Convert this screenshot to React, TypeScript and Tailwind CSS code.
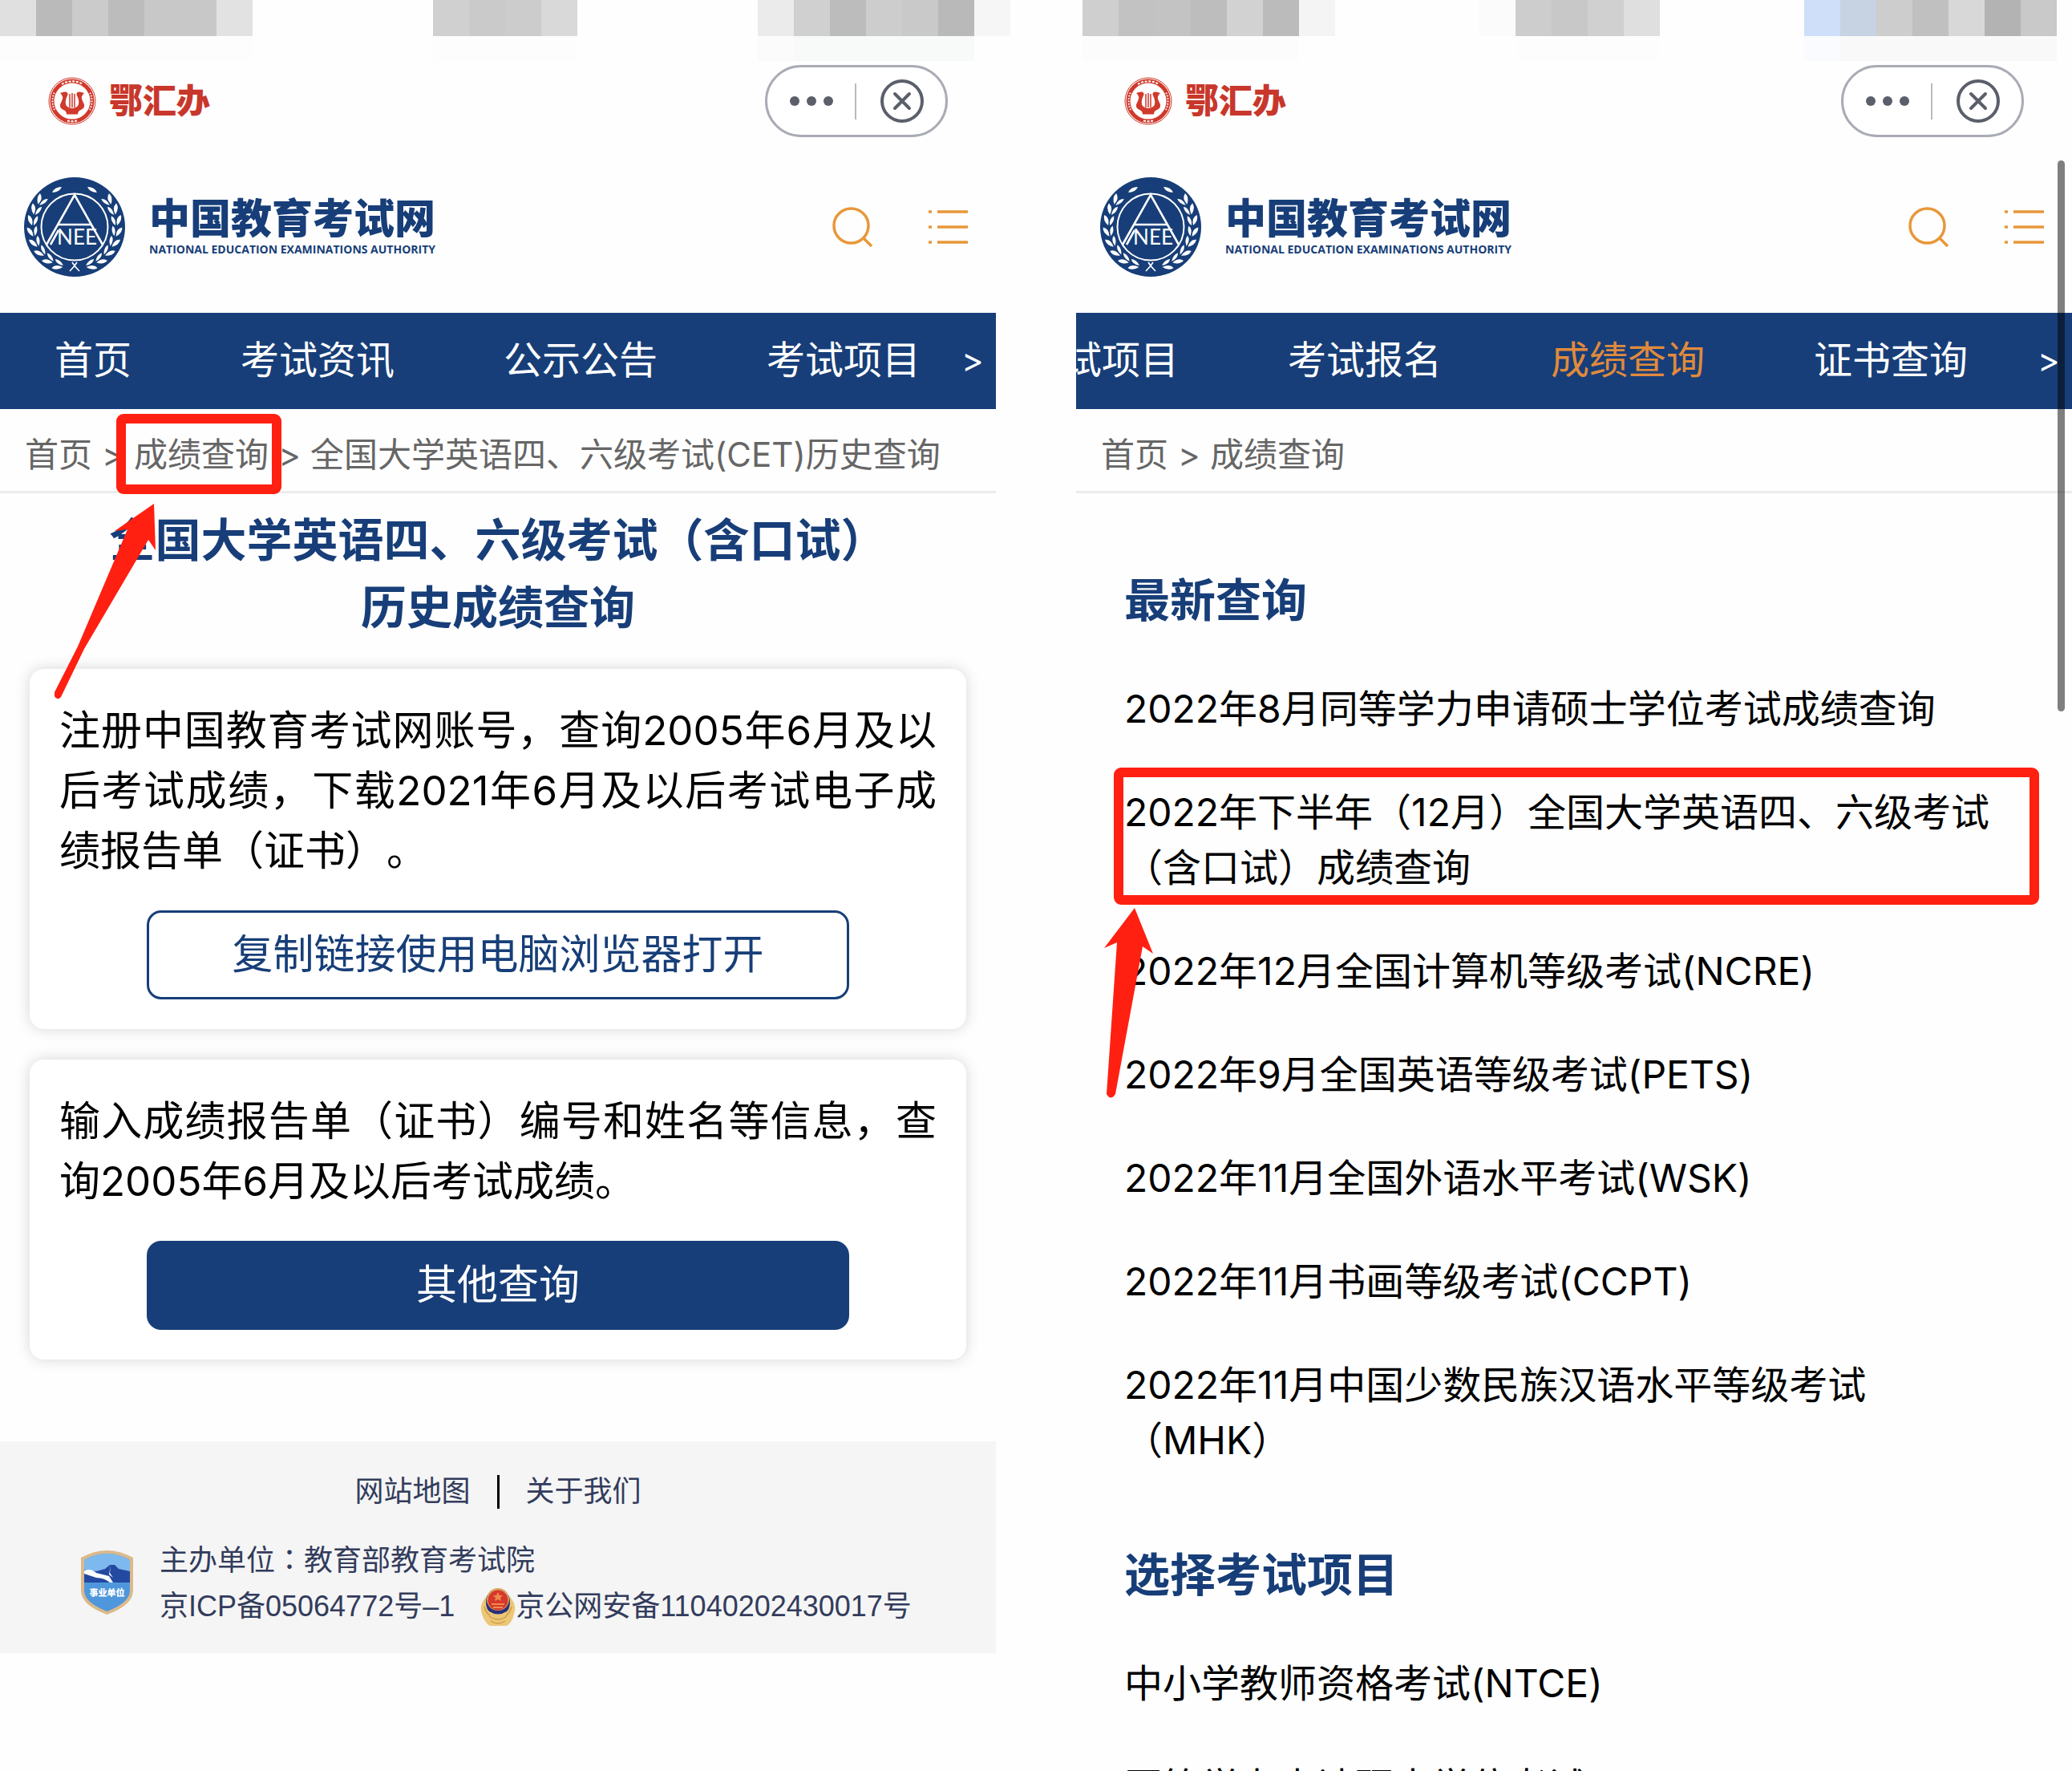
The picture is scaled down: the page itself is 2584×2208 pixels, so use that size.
import React from "react";

const STRIP: [number, string][] = [
  [1, "bg-[#e0e0e0]"], [1, "bg-[#bababa]"], [1, "bg-[#cbcbcb]"], [1, "bg-[#bcbcbc]"], [2, "bg-[#c8c8c8]"], [1, "bg-[#e2e2e2]"],
  [5, ""], [1, "bg-[#d0d0d0]"], [1, "bg-[#cacaca]"], [1, "bg-[#cccccc]"], [1, "bg-[#d9d9d9]"],
  [5, ""], [1, "bg-[#ebebeb]"], [1, "bg-[#d0d0d0]"], [1, "bg-[#bcbcbc]"], [1, "bg-[#cdcdcd]"], [1, "bg-[#c9c9c9]"], [1, "bg-[#b9b9b9]"], [1, "bg-[#f6f6f6]"],
  [2, ""], [1, "bg-[#cfcfcf]"], [1, "bg-[#c2c2c2]"], [1, "bg-[#c3c3c3]"], [1, "bg-[#bdbdbd]"], [1, "bg-[#d2d2d2]"], [1, "bg-[#bbbbbb]"], [1, "bg-[#f4f4f4]"],
  [4, ""], [1, "bg-[#fbfbfb]"], [1, "bg-[#cdcdcd]"], [1, "bg-[#c8c8c8]"], [1, "bg-[#d0d0d0]"], [1, "bg-[#dfdfdf]"],
  [4, ""], [1, "bg-[#cfdffa]"], [1, "bg-[#c7d2e2]"], [1, "bg-[#cdcdcd]"], [1, "bg-[#c0c0c0]"], [1, "bg-[#d8d8d8]"], [1, "bg-[#b3b3b3]"], [1, "bg-[#c9c9c9]"],
];

const STRIP_FADE: [number, string][] = [
  [7, "bg-[#fdfdfd]"], [5, ""], [4, "bg-[#fdfdfd]"], [5, ""], [1, "bg-[#fbfbfb]"], [5, "bg-[#f8f9f9]"],
  [3, ""], [6, "bg-[#fcfcfc]"], [6, ""], [4, "bg-[#fdfdfd]"], [4, ""], [1, "bg-[#f9fbff]"], [6, "bg-[#f9f9f9]"],
];

function Mosaic() {
  return (
    <div aria-hidden="true" className="w-full overflow-hidden">
      <div className="flex h-[45px]">
        {STRIP.map(([n, c], i) => (
          <div key={i} className={"shrink-0 " + c} style={{ width: n * 45 }} />
        ))}
      </div>
      <div className="flex h-[31px]">
        {STRIP_FADE.map(([n, c], i) => (
          <div key={i} className={"shrink-0 " + c} style={{ width: n * 45 }} />
        ))}
      </div>
    </div>
  );
}

function LyreLogo() {
  return (
    <svg viewBox="0 0 60 60" className="size-[60px]" aria-hidden="true">
      <g fill="none" stroke="#d0392b">
        <circle cx="30" cy="30" r="29" strokeWidth="1" />
        <circle cx="30" cy="30" r="25" strokeWidth="5" />
      </g>
      <g fill="none" stroke="#fff" strokeWidth="2">
        <path d="M8 41A25 25 0 0 1 8 19M52 41A25 25 0 0 0 52 19" strokeDasharray="1.6 1.8" />
        <path d="M17 9A25 25 0 0 1 43 9" strokeDasharray="3 1.6" />
        <path d="M24 54.5A25 25 0 0 0 36 54.5" strokeDasharray="3 1.6" />
      </g>
      <path
        d="M15 20Q25 16 24.500 22Q19 33 24 37Q30 41 36 37Q41 33 35.500 22Q35 16 45 20Q40 24 43 30Q48 38 41 41Q37 42 37 46.500H23Q23 42 19 41Q12 38 17 30Q20 24 15 20Z"
        fill="#d0392b"
      />
      <path d="M27 21V38M30 20V38M33 21V38" stroke="#d0392b" strokeWidth="1.500" />
    </svg>
  );
}

const LEAVES = [16, 31, 46, 61, 76, 91, 106, 121];

function Laurel() {
  return (
    <g fill="#fff">
      {LEAVES.map((deg) => {
        const t = (deg * Math.PI) / 180;
        const x = -52 * Math.sin(t);
        const y = 52 * Math.cos(t);
        const dir = 180 + deg;
        return (
          <g key={deg} transform={`translate(${x} ${y}) rotate(${dir})`}>
            <path d="M0 -1Q6 -8 13 -6Q10 1 0 -1Z" />
            <path d="M0 1Q5 7 12 6Q9 0 0 1Z" />
          </g>
        );
      })}
      <path d="M-28 -42Q-25 -49 -16 -49Q-19 -42 -28 -42Z" />
    </g>
  );
}

function NeeaLogo() {
  return (
    <svg viewBox="0 0 126 124" className="h-[124px] w-[126px]" aria-hidden="true">
      <ellipse cx="63" cy="62" rx="63" ry="62" fill="#173e78" />
      <g transform="translate(63 61)">
        <Laurel />
        <g transform="scale(-1 1)">
          <Laurel />
        </g>
        <path d="M-6 56Q0 50 3 45M6 56Q0 50 -3 45" fill="none" stroke="#fff" strokeWidth="1.600" />
      </g>
      <circle cx="63" cy="62" r="41.500" fill="#173e78" stroke="#fff" strokeWidth="2" />
      <path d="M28 84L63 22L98 84M43 59H83M33 84L43 66" fill="none" stroke="#fff" strokeWidth="2.600" />
      <text x="66" y="84" textAnchor="middle" fontSize="26" fill="#fff" fontFamily="Lato, sans-serif">
        NEE
      </text>
    </svg>
  );
}

function SearchIcon() {
  return (
    <svg viewBox="0 0 50 50" className="size-[50px]" fill="none" stroke="#e8973a" strokeWidth="3.500" aria-hidden="true">
      <circle cx="23.500" cy="23.500" r="21.500" />
      <path d="M38 38L49 49" />
    </svg>
  );
}

function ListIcon() {
  return (
    <svg viewBox="0 0 50 50" className="size-[50px]" stroke="#e8973a" strokeWidth="3.500" aria-hidden="true">
      <path d="M0 6H4M11 6H49M0 25H4M11 25H49M0 44H4M11 44H49" />
    </svg>
  );
}

function CloseIcon() {
  return (
    <svg viewBox="0 0 56 56" className="size-[56px]" fill="none" stroke="#5b5f6b" strokeWidth="4" strokeLinecap="round" aria-hidden="true">
      <circle cx="28" cy="28" r="25" />
      <path d="M19 19L37 37M37 19L19 37" />
    </svg>
  );
}

function Header() {
  return (
    <header>
      <div className="flex items-center justify-between pt-[5px] pr-[60px] pl-[60px]">
        <div className="flex items-center gap-4">
          <LyreLogo />
          <span className="text-[42px] leading-[48px] font-black text-[#c8372b]">鄂汇办</span>
        </div>
        <div className="flex h-[90px] w-[228px] items-center rounded-full border-[3px] border-[#a9acb4] bg-white">
          <button aria-label="更多" className="flex flex-1 items-center justify-center gap-[9px]">
            <span className="size-3 rounded-full bg-[#5b5f6b]" />
            <span className="size-3 rounded-full bg-[#5b5f6b]" />
            <span className="size-3 rounded-full bg-[#5b5f6b]" />
          </button>
          <span className="h-[45px] w-[2px] bg-[#b9bbc1]" />
          <button aria-label="关闭" className="flex flex-1 items-center justify-center pl-[2px]">
            <CloseIcon />
          </button>
        </div>
      </div>
      <div className="flex h-[219px] items-center justify-between pt-[4px] pr-[34px] pl-[30px]">
        <a href="#home" className="flex items-center gap-[30px] text-[#173e78]">
          <NeeaLogo />
          <span className="flex flex-col">
            <span className="text-[51px] leading-[56px] font-black">中国教育考试网</span>
            <span className="font-['Open_Sans',sans-serif] text-[14px] leading-[20px] font-bold whitespace-nowrap">
              NATIONAL EDUCATION EXAMINATIONS AUTHORITY
            </span>
          </span>
        </a>
        <div className="flex items-center gap-[70px]">
          <button aria-label="搜索">
            <SearchIcon />
          </button>
          <button aria-label="菜单">
            <ListIcon />
          </button>
        </div>
      </div>
    </header>
  );
}

function Nav({ items, active, scrolled }: { items: string[]; active?: string; scrolled?: boolean }) {
  return (
    <nav className="flex h-[120px] items-center bg-[#173e78] pb-[2px] text-[48px] leading-[72px] text-white">
      <div className="min-w-0 flex-1 overflow-hidden">
        <ul className={scrolled ? "-ml-[132px] flex" : "flex"}>
          {items.map((t) => (
            <li key={t} className="shrink-0 px-[68px]">
              <a href="#nav" className={t === active ? "text-[#e08a3c]" : ""}>{t}</a>
            </li>
          ))}
        </ul>
      </div>
      <button aria-label="更多栏目" className="w-[58px] shrink-0 text-center text-[42px]">&gt;</button>
    </nav>
  );
}

function Sep() {
  return <span className="w-[52px] text-center">&gt;</span>;
}

const CRUMBS = "flex h-[105px] items-center border-b-[3px] border-[#ececec] px-[31px] pt-[12px] text-[42px] leading-[60px] text-[#666] whitespace-nowrap";
const BODY_TEXT = "text-justify text-[51px] leading-[75px] text-black";
const CARD = "rounded-[18px] bg-white px-[37px] pt-[39px] pb-[37px] shadow-[0_0_18px_rgba(0,0,0,0.16)]";

function LeftPage() {
  return (
    <section className="min-w-0">
      <Header />
      <Nav items={["首页", "考试资讯", "公示公告", "考试项目"]} />
      <div className={CRUMBS}>
        <a href="#home">首页</a>
        <Sep />
        <a href="#score" className="relative">
          成绩查询
          <span className="absolute -top-[21px] -right-[16px] -left-[22px] h-[100px] rounded-[9px] border-[12px] border-[#ff2012]" />
          <svg viewBox="0 0 130 250" className="absolute top-[90px] -left-[99px] h-[250px] w-[130px]" aria-hidden="true">
            <path d="M124 1L126 59L117 46L37 182L8 242Q3 247 0 241Q-1 238 0 236L29 179L91 33L75 35Z" fill="#ff2012" />
          </svg>
        </a>
        <Sep />
        <span>全国大学英语四、六级考试(CET)历史查询</span>
      </div>
      <h1 className="pt-[17px] text-center text-[57px] leading-[84px] font-bold text-[#173e78]">
        全国大学英语四、六级考试（含口试）
        <br />
        历史成绩查询
      </h1>
      <div className="flex flex-col gap-[38px] px-[37px] pt-[34px]">
        <div className={CARD}>
          <p className={BODY_TEXT}>
            注册中国教育考试网账号，查询2005年6月及以后考试成绩，下载2021年6月及以后考试电子成绩报告单（证书）。
          </p>
          <button className="mx-auto mt-[37px] block h-[111px] w-4/5 rounded-[18px] border-[3px] border-[#173e78] bg-white text-[51px] text-[#173e78]">
            复制链接使用电脑浏览器打开
          </button>
        </div>
        <div className={CARD}>
          <p className={BODY_TEXT}>输入成绩报告单（证书）编号和姓名等信息，查询2005年6月及以后考试成绩。</p>
          <button className="mx-auto mt-[37px] block h-[111px] w-4/5 rounded-[18px] bg-[#173e78] text-[51px] text-white">
            其他查询
          </button>
        </div>
      </div>
      <footer className="mt-[102px] h-[264px] bg-[#f5f5f5] pt-[34px] font-['Liberation_Sans','Noto_Sans_CJK_SC',sans-serif] text-[36px] leading-[57px] text-[#333c5c]">
        <div className="flex items-center justify-center gap-[33px]">
          <a href="#map">网站地图</a>
          <span className="h-[42px] w-[3px] bg-black" />
          <a href="#about">关于我们</a>
        </div>
        <div className="mt-[26px] flex items-center gap-[32px] pl-[100px] whitespace-nowrap">
          <Shield />
          <div>
            <p>主办单位<span className="font-['Noto_Sans_CJK_TC']">：</span>教育部教育考试院</p>
            <p className="flex items-center">
              <a href="#icp">京ICP备05064772号–1</a>
              <span className="ml-[32px]"><PoliceBadge /></span>
              <a href="#police">京公网安备11040202430017号</a>
            </p>
          </div>
        </div>
      </footer>
    </section>
  );
}

function Shield() {
  return (
    <svg viewBox="0 0 67 80" className="h-[80px] w-[67px] shrink-0" aria-hidden="true">
      <path d="M1 9Q18 0 33.500 0Q49 0 66 9V50Q66 68 33.500 80Q1 68 1 50Z" fill="#dcb98a" />
      <path d="M5 12Q19 4 33.500 4Q48 4 62 12V50Q62 65 33.500 76Q5 65 5 50Z" fill="#4f97dc" />
      <path d="M5 12Q19 4 33.500 4Q48 4 62 12V39H5Z" fill="#7db9ee" />
      <path d="M5 24L20 26L31 23L37 18H43L48 23L62 26V40H5Z" fill="#2349a0" />
      <path d="M5 25Q14 22 20 28L36 32L41 40H37Q30 34 20 34L5 29ZM38 18L37 28L41 34L36 30Z" fill="#fff" />
      <text x="33.500" y="57" textAnchor="middle" fontSize="11" fontWeight="900" fill="#fff">事业单位</text>
    </svg>
  );
}

function PoliceBadge() {
  return (
    <svg viewBox="0 0 44 48" className="h-[48px] w-[44px]" aria-hidden="true">
      <path d="M7 12Q-2 22 2 33Q5 44 12 48H33Q40 44 42 33Q46 22 37 12Z" fill="#ecc777" />
      <path d="M8 11Q5 24 11 30Q22 37 33 30Q39 24 36 11L30 4H14Z" fill="#28307c" />
      <circle cx="22" cy="15" r="14" fill="#d8a560" />
      <circle cx="22" cy="16" r="12.500" fill="#d6382c" />
      <path d="M22 6L24 10H28L25 13L26 17L22 15L18 17L19 13L16 10H20ZM14 20H30V22H14ZM16 24H28V26H16Z" fill="#ef8a4d" />
      <path d="M11 36Q22 44 33 36M13 42Q22 48 31 42M5 24Q7 32 12 35M39 24Q37 32 32 35" stroke="#cf9c45" strokeWidth="1.500" fill="none" />
    </svg>
  );
}

const LATEST = [
  "2022年8月同等学力申请硕士学位考试成绩查询",
  "2022年下半年（12月）全国大学英语四、六级考试（含口试）成绩查询",
  "2022年12月全国计算机等级考试(NCRE)",
  "2022年9月全国英语等级考试(PETS)",
  "2022年11月全国外语水平考试(WSK)",
  "2022年11月书画等级考试(CCPT)",
  "2022年11月中国少数民族汉语水平等级考试（MHK）",
];

const PROJECTS = ["中小学教师资格考试(NTCE)", "同等学力申请硕士学位考试"];

const H2 = "text-[57px] leading-[84px] font-bold text-[#173e78]";
const LIST = "mt-[58px] flex flex-col gap-[60px] text-[48px] leading-[69px] text-black";

function RightPage() {
  return (
    <section className="relative min-w-0">
      <Header />
      <Nav items={["考试项目", "考试报名", "成绩查询", "证书查询"]} active="成绩查询" scrolled />
      <div className={CRUMBS}>
        <a href="#home">首页</a>
        <Sep />
        <a href="#score">成绩查询</a>
      </div>
      <div className="flex flex-col gap-[92px] pt-[92px] pr-[90px] pl-[60px]">
        <div>
          <h2 className={H2}>最新查询</h2>
          <ul className={LIST}>
            {LATEST.map((t, i) => (
              <li key={t} className="relative">
                <a href="#item">{t}</a>
                {i === 1 && (
                  <>
                    <span className="absolute -top-[21px] -right-[49px] -left-[13px] h-[171px] rounded-[9px] border-[12px] border-[#ff2012]" />
                    <svg viewBox="0 0 64 240" className="absolute top-[153px] -left-[26px] z-10 h-[240px] w-[64px]" aria-hidden="true">
                      <path d="M39 1L62 58L49 49L15 233Q9 242 4 233L17 44L1 51Z" fill="#ff2012" />
                    </svg>
                  </>
                )}
              </li>
            ))}
          </ul>
        </div>
        <div>
          <h2 className={H2}>选择考试项目</h2>
          <ul className={LIST}>
            {PROJECTS.map((t) => (
              <li key={t}>
                <a href="#project">{t}</a>
              </li>
            ))}
          </ul>
        </div>
      </div>
      <div aria-hidden="true" className="absolute top-[124px] right-[9px] h-[687px] w-[9px] rounded-full bg-black/50" />
    </section>
  );
}

export default function App() {
  return (
    <main className="h-screen overflow-hidden bg-[#fefefe] font-['Inter','Noto_Sans_CJK_SC',sans-serif] [text-spacing-trim:space-all]">
      <Mosaic />
      <div className="grid grid-cols-2 gap-[100px]">
        <LeftPage />
        <RightPage />
      </div>
    </main>
  );
}
